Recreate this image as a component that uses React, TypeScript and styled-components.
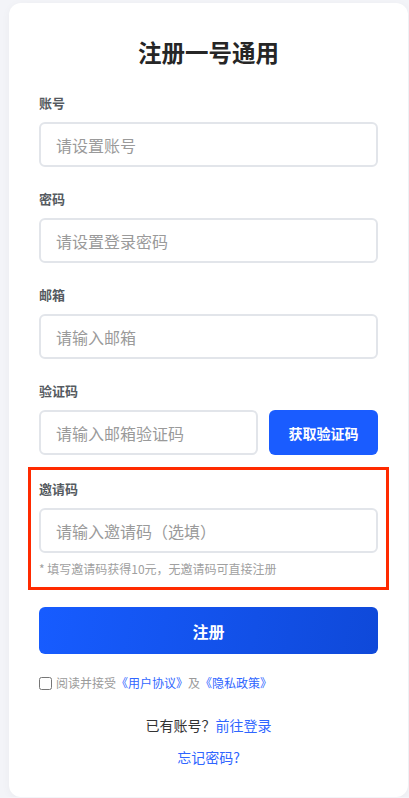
import React from "react";
import styled, { createGlobalStyle } from "styled-components";

const Global = createGlobalStyle`
  html, body { margin: 0; padding: 0; }
  body {
    background: #f3f4f8;
    font-family: "Noto Sans CJK SC", "Noto Sans", sans-serif;
    padding: 3px 1px 0 9px;
  }
  * { box-sizing: border-box; }
`;

const Card = styled.div`
  background: #ffffff;
  border-radius: 12px;
  box-shadow: 0 2px 10px rgba(0, 0, 0, 0.04);
  padding: 34px 30px 30px;
  display: flex;
  flex-direction: column;
`;

const Title = styled.h1`
  margin: 0 0 26px;
  font-size: 23.5px;
  line-height: 31px;
  font-weight: 700;
  color: #262626;
  text-align: center;
`;

const Field = styled.div<{ $highlight?: boolean }>`
  display: flex;
  flex-direction: column;
  margin-bottom: ${(p) => (p.$highlight ? "28px" : "23px")};
  ${(p) =>
    p.$highlight
      ? `outline: 3px solid #ff2a00; outline-offset: 8px; padding: 2px 0 2px;`
      : ""}
`;

const Label = styled.label`
  font-size: 13px;
  line-height: 18px;
  font-weight: 700;
  color: #555a60;
  margin-bottom: 10px;
`;

const Input = styled.input`
  width: 100%;
  height: 45px;
  border: 2px solid #e2e5ea;
  border-radius: 6px;
  padding: 0 15px;
  font-family: inherit;
  font-size: 16px;
  color: #333;
  background: #fff;
  outline: none;
  &::placeholder {
    color: #9a9a9a;
  }
`;

const Row = styled.div`
  display: flex;
  gap: 11px;
`;

const CodeButton = styled.button`
  flex: 0 0 109px;
  height: 45px;
  border: none;
  border-radius: 6px;
  background: #1a5cff;
  color: #fff;
  font-family: inherit;
  font-size: 14px;
  font-weight: 700;
`;

const Hint = styled.div`
  margin-top: 7px;
  font-size: 12px;
  line-height: 17px;
  color: #a0a0a0;
`;

const Submit = styled.button`
  height: 47px;
  width: 100%;
  border: none;
  border-radius: 6px;
  background: linear-gradient(100deg, #175cff 0%, #0f49d9 100%);
  color: #fff;
  font-family: inherit;
  font-size: 16px;
  font-weight: 700;
  margin-bottom: 20px;
`;

const Agree = styled.label`
  display: flex;
  align-items: center;
  font-size: 12px;
  line-height: 18px;
  color: #9a9a9a;
  margin-bottom: 23px;
`;

const Check = styled.input`
  width: 13px;
  height: 13px;
  margin: 0 4px 0 0;
`;

const Link = styled.a`
  color: #2f66ff;
  text-decoration: none;
`;

const Footer = styled.div<{ $gap?: number }>`
  text-align: center;
  font-size: 14px;
  line-height: 20px;
  color: #333;
  margin-bottom: ${(p) => p.$gap ?? 0}px;
`;

export default function App() {
  return (
    <>
      <Global />
      <Card>
        <Title>注册一号通用</Title>
        <Field>
          <Label>账号</Label>
          <Input placeholder="请设置账号" />
        </Field>
        <Field>
          <Label>密码</Label>
          <Input type="password" placeholder="请设置登录密码" />
        </Field>
        <Field>
          <Label>邮箱</Label>
          <Input placeholder="请输入邮箱" />
        </Field>
        <Field>
          <Label>验证码</Label>
          <Row>
            <Input placeholder="请输入邮箱验证码" />
            <CodeButton>获取验证码</CodeButton>
          </Row>
        </Field>
        <Field $highlight>
          <Label>邀请码</Label>
          <Input placeholder="请输入邀请码（选填）" />
          <Hint>* 填写邀请码获得10元，无邀请码可直接注册</Hint>
        </Field>
        <Submit>注册</Submit>
        <Agree>
          <Check type="checkbox" />
          阅读并接受<Link>《用户协议》</Link>及<Link>《隐私政策》</Link>
        </Agree>
        <Footer $gap={12}>
          已有账号？<Link>前往登录</Link>
        </Footer>
        <Footer>
          <Link>忘记密码?</Link>
        </Footer>
      </Card>
    </>
  );
}
